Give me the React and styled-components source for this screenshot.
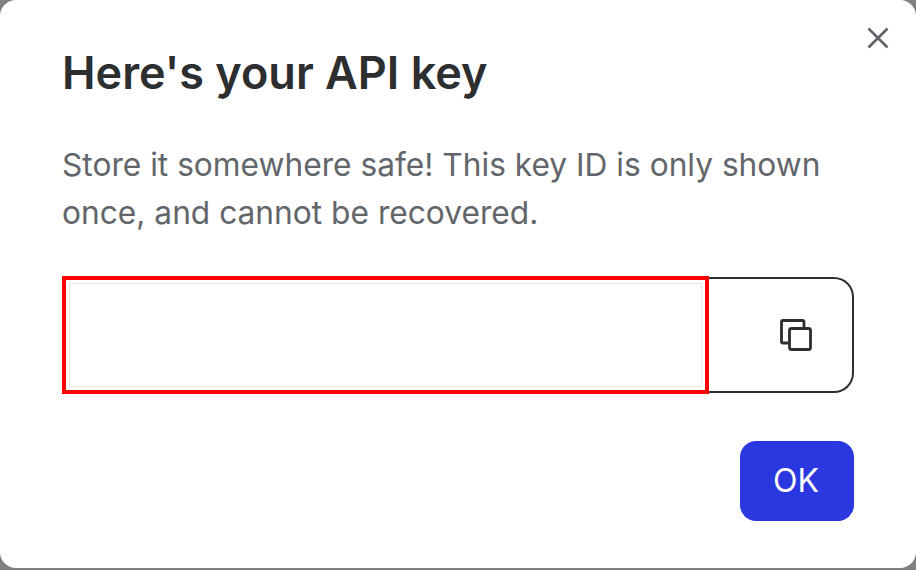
import React from 'react';
import styled, { createGlobalStyle } from 'styled-components';

const Global = createGlobalStyle`
  html, body {
    margin: 0;
    padding: 0;
    background: #808080;
    font-family: Inter, "Liberation Sans", sans-serif;
  }
`

const Dialog = styled.div`
  position: relative;
  box-sizing: border-box;
  width: 916px;
  height: 568px;
  padding: 44px 62px 0 62px;
  background: #fff;
  border-radius: 16px;
`

const CloseButton = styled.button`
  position: absolute;
  top: 26px;
  right: 26px;
  width: 24px;
  height: 24px;
  padding: 0;
  border: none;
  background: none;
  color: #5f6368;
`

const Title = styled.h1`
  margin: 0;
  font-size: 45px;
  line-height: 58px;
  font-weight: 600;
  color: #2c2e30;
`

const Description = styled.p`
  margin: 39px 0 0 0;
  width: 770px;
  font-size: 31.7px;
  line-height: 48px;
  font-weight: 400;
  color: #62666a;
`

const KeyField = styled.div`
  display: flex;
  align-items: center;
  width: 792px;
  margin-top: 39px;
`

const Highlight = styled.div`
  box-sizing: border-box;
  width: 647px;
  height: 118px;
  padding: 3px;
  border: 4px solid #ff0000;
`

const KeyInput = styled.input`
  display: block;
  box-sizing: border-box;
  width: 100%;
  height: 100%;
  border: 1.5px solid #f6e0dc;
  border-radius: 0;
  outline: none;
  background: #fff;
`

const CopyCell = styled.div`
  flex: 1;
  display: flex;
  align-items: center;
  justify-content: center;
  box-sizing: border-box;
  height: 116px;
  padding-left: 30px;
  border: 2px solid #2c2e30;
  border-left: none;
  border-radius: 0 20px 20px 0;
  color: #2c2e30;
`

const Footer = styled.div`
  display: flex;
  justify-content: flex-end;
  width: 792px;
  margin-top: 47px;
`

const OkButton = styled.button`
  width: 114px;
  height: 80px;
  padding: 0 2px 2px 0;
  border: none;
  border-radius: 16px;
  background: #2b37df;
  color: #fff;
  font-family: inherit;
  font-size: 32px;
  font-weight: 400;
`

function CloseIcon() {
  return (
    <svg width="24" height="24" viewBox="0 0 24 24" fill="none" stroke="currentColor" strokeWidth="2.6">
      <path d="M2.5 2.5 L21.5 21.5 M21.5 2.5 L2.5 21.5" />
    </svg>
  );
}

function CopyIcon() {
  return (
    <svg width="32" height="32" viewBox="0 0 32 32" fill="none" stroke="currentColor" strokeWidth="2.8">
      <path d="M8.5 24 H3 Q1.5 24 1.5 22.5 V3 Q1.5 1.5 3 1.5 H22.5 Q24 1.5 24 3 V8.5" />
      <rect x="9.5" y="9.5" width="21" height="21" rx="2" />
    </svg>
  );
}

function App() {
  return (
    <>
      <Global />
      <Dialog>
        <CloseButton aria-label="Close"><CloseIcon /></CloseButton>
        <Title>Here's your API key</Title>
        <Description>
          Store it somewhere safe! This key ID is only shown once, and cannot be recovered.
        </Description>
        <KeyField>
          <Highlight><KeyInput readOnly /></Highlight>
          <CopyCell><CopyIcon /></CopyCell>
        </KeyField>
        <Footer>
          <OkButton>OK</OkButton>
        </Footer>
      </Dialog>
    </>
  );
}

export default App;
